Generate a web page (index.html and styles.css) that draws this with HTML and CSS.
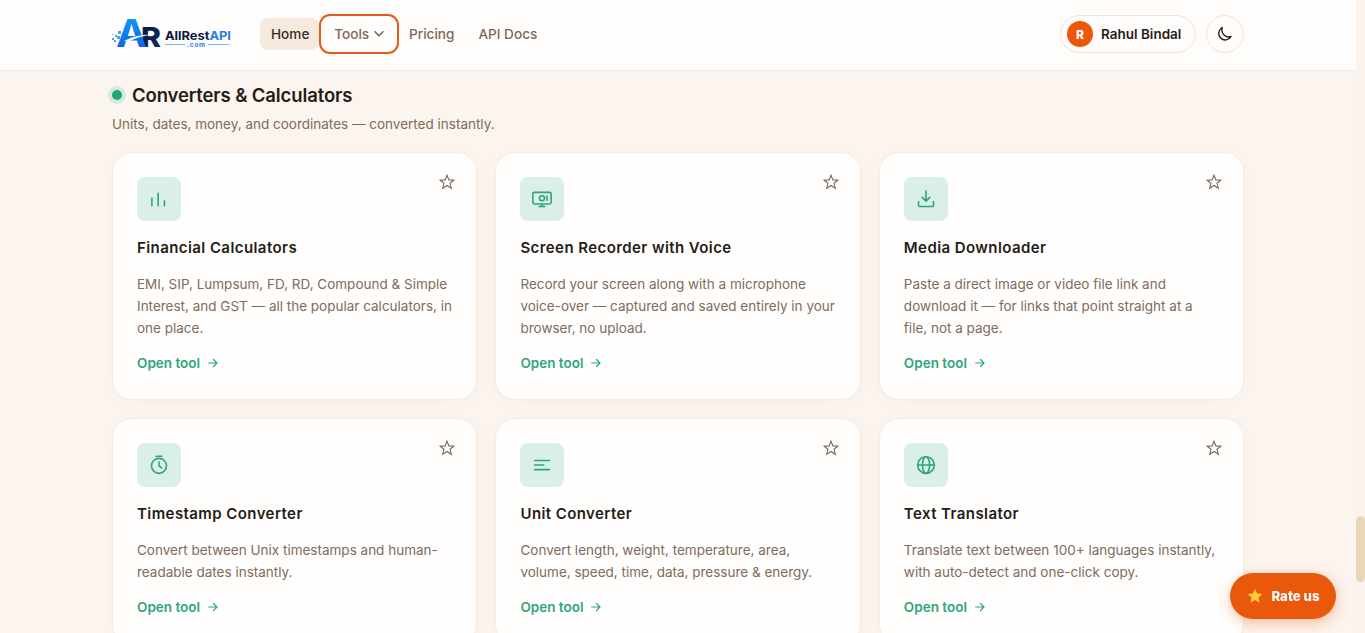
FILE: index.html
```html
<!DOCTYPE html>
<html lang="en">
<head>
    <meta charset="UTF-8">
    <meta name="viewport" content="width=device-width, initial-scale=1.0">
    <title>AllRestAPI - Converters &amp; Calculators</title>
    <link rel="stylesheet" href="styles.css">
</head>
<body>
    <header class="header">
        <div class="container header-inner">
            <a href="#" class="logo">
                <svg width="124" height="54" viewBox="0 -9 124 54">
                    <defs>
                        <linearGradient id="logoBlue" x1="0" y1="0" x2="0" y2="1">
                            <stop offset="0" stop-color="#12a5fb"/>
                            <stop offset="1" stop-color="#0b55e6"/>
                        </linearGradient>
                        <linearGradient id="logoNavy" x1="0" y1="0" x2="1" y2="1">
                            <stop offset="0" stop-color="#071334"/>
                            <stop offset="1" stop-color="#12306e"/>
                        </linearGradient>
                    </defs>
                    <g fill="#3ba7f5">
                        <rect x="0" y="22" width="2" height="2"/>
                        <rect x="3" y="19" width="2" height="2"/>
                        <rect x="6" y="15" width="3" height="3"/>
                        <rect x="5" y="20" width="3" height="3"/>
                        <rect x="2" y="24" width="2" height="2"/>
                        <rect x="0" y="18" width="1" height="1"/>
                    </g>
                    <text class="logo-mark" x="29" y="31" font-size="27.5" textLength="20" lengthAdjust="spacingAndGlyphs" fill="url(#logoNavy)">R</text>
                    <text class="logo-mark logo-mark-a" x="4" y="31" font-size="38" textLength="31" lengthAdjust="spacingAndGlyphs" fill="url(#logoBlue)">A</text>
                    <path d="M12 25Q24 18 41 18.500Q27 20 17 25.500Z" fill="#fff"/>
                    <text class="logo-text" x="53" y="24" font-size="12" textLength="66" lengthAdjust="spacingAndGlyphs" fill="#0c1a40">AllRest<tspan fill="#2b7df0">API</tspan></text>
                    <path d="M53 28.500H73M96 28.500H117" stroke="#7db4f3" stroke-width="1"/>
                    <text class="logo-text" x="75" y="30.500" font-size="6.500" textLength="18" fill="#2b7df0">.com</text>
                </svg>
            </a>
            <nav class="nav">
                <a href="#" class="nav-link active">Home</a>
                <button class="nav-link nav-tools">Tools
                    <svg width="10" height="6" viewBox="0 0 10 6" fill="none" stroke="currentColor" stroke-width="1.6" stroke-linecap="round" stroke-linejoin="round"><path d="M1 .8 5 4.8 9 .8"/></svg>
                </button>
                <a href="#" class="nav-link">Pricing</a>
                <a href="#" class="nav-link nav-docs">API Docs</a>
            </nav>
            <div class="header-actions">
                <a href="#" class="user-chip"><span class="avatar">R</span>Rahul Bindal</a>
                <button class="theme-button" aria-label="Toggle theme">
                    <svg width="16" height="16" viewBox="0 0 16 16" fill="none" stroke="currentColor" stroke-width="1.4" stroke-linejoin="round"><path d="M5.200 1.500A6.600 6.600 0 1 0 14.100 10.500C9.500 12.300 3.500 8.500 5.200 1.500Z"/></svg>
                </button>
            </div>
        </div>
    </header>

    <main class="container tools-section">
        <h2 class="section-title"><span class="dot"></span>Converters &amp; Calculators</h2>
        <p class="section-text">Units, dates, money, and coordinates — converted instantly.</p>

        <div class="tools-grid">
            <article class="tool-card">
                <div class="card-top">
                    <div class="tool-icon">
                        <svg viewBox="0 0 24 24"><path d="M3.500 20V11M11 20V5M18.500 20v-6"/></svg>
                    </div>
                    <svg class="star" viewBox="0 0 16 16"><path d="M8 1.300 9.900 5.900 14.800 6.200 11 9.300 12.300 14.200 8 11.500 3.700 14.200 5 9.300 1.200 6.200 6.100 5.900Z"/></svg>
                </div>
                <h3>Financial Calculators</h3>
                <p>EMI, SIP, Lumpsum, FD, RD, Compound &amp; Simple Interest, and GST — all the popular calculators, in one place.</p>
                <a href="#" class="open-link">Open tool <svg viewBox="0 0 10 10"><path d="M.7 5H9M5.500 1.500 9 5 5.500 8.500"/></svg></a>
            </article>

            <article class="tool-card">
                <div class="card-top">
                    <div class="tool-icon">
                        <svg viewBox="0 0 24 24"><rect x="1" y="4" width="22" height="14" rx="2"/><circle cx="12" cy="11" r="3"/><path d="M18 8.500v5M12 18v3M8.500 21h7"/></svg>
                    </div>
                    <svg class="star" viewBox="0 0 16 16"><path d="M8 1.300 9.900 5.900 14.800 6.200 11 9.300 12.300 14.200 8 11.500 3.700 14.200 5 9.300 1.200 6.200 6.100 5.900Z"/></svg>
                </div>
                <h3>Screen Recorder with Voice</h3>
                <p>Record your screen along with a microphone voice-over — captured and saved entirely in your browser, no upload.</p>
                <a href="#" class="open-link">Open tool <svg viewBox="0 0 10 10"><path d="M.7 5H9M5.500 1.500 9 5 5.500 8.500"/></svg></a>
            </article>

            <article class="tool-card">
                <div class="card-top">
                    <div class="tool-icon">
                        <svg viewBox="0 0 24 24"><path d="M12 2.500V14M7.500 10l4.500 4.500 4.500-4.500M3 15v4.500a1.500 1.500 0 0 0 1.500 1.500h15a1.500 1.500 0 0 0 1.500-1.500V15"/></svg>
                    </div>
                    <svg class="star" viewBox="0 0 16 16"><path d="M8 1.300 9.900 5.900 14.800 6.200 11 9.300 12.300 14.200 8 11.500 3.700 14.200 5 9.300 1.200 6.200 6.100 5.900Z"/></svg>
                </div>
                <h3>Media Downloader</h3>
                <p>Paste a direct image or video file link and download it — for links that point straight at a file, not a page.</p>
                <a href="#" class="open-link">Open tool <svg viewBox="0 0 10 10"><path d="M.7 5H9M5.500 1.500 9 5 5.500 8.500"/></svg></a>
            </article>

            <article class="tool-card">
                <div class="card-top">
                    <div class="tool-icon">
                        <svg viewBox="0 0 24 24"><circle cx="12" cy="13" r="9"/><path d="M12 8.500V13l3 2.500M8.500 1.500h7"/></svg>
                    </div>
                    <svg class="star" viewBox="0 0 16 16"><path d="M8 1.300 9.900 5.900 14.800 6.200 11 9.300 12.300 14.200 8 11.500 3.700 14.200 5 9.300 1.200 6.200 6.100 5.900Z"/></svg>
                </div>
                <h3>Timestamp Converter</h3>
                <p>Convert between Unix timestamps and human-readable dates instantly.</p>
                <a href="#" class="open-link">Open tool <svg viewBox="0 0 10 10"><path d="M.7 5H9M5.500 1.500 9 5 5.500 8.500"/></svg></a>
            </article>

            <article class="tool-card">
                <div class="card-top">
                    <div class="tool-icon">
                        <svg viewBox="0 0 24 24"><path d="M3 6.500h18M3 12h11M3 17.500h18"/></svg>
                    </div>
                    <svg class="star" viewBox="0 0 16 16"><path d="M8 1.300 9.900 5.900 14.800 6.200 11 9.300 12.300 14.200 8 11.500 3.700 14.200 5 9.300 1.200 6.200 6.100 5.900Z"/></svg>
                </div>
                <h3>Unit Converter</h3>
                <p>Convert length, weight, temperature, area, volume, speed, time, data, pressure &amp; energy.</p>
                <a href="#" class="open-link">Open tool <svg viewBox="0 0 10 10"><path d="M.7 5H9M5.500 1.500 9 5 5.500 8.500"/></svg></a>
            </article>

            <article class="tool-card">
                <div class="card-top">
                    <div class="tool-icon">
                        <svg viewBox="0 0 24 24"><circle cx="12" cy="12" r="10"/><ellipse cx="12" cy="12" rx="4.300" ry="10"/><path d="M2 12h20"/></svg>
                    </div>
                    <svg class="star" viewBox="0 0 16 16"><path d="M8 1.300 9.900 5.900 14.800 6.200 11 9.300 12.300 14.200 8 11.500 3.700 14.200 5 9.300 1.200 6.200 6.100 5.900Z"/></svg>
                </div>
                <h3>Text Translator</h3>
                <p>Translate text between 100+ languages instantly, with auto-detect and one-click copy.</p>
                <a href="#" class="open-link">Open tool <svg viewBox="0 0 10 10"><path d="M.7 5H9M5.500 1.500 9 5 5.500 8.500"/></svg></a>
            </article>
        </div>
    </main>

    <button class="rate-button">
        <svg width="16" height="16" viewBox="0 0 16 16"><path d="M8 .8 10.200 5.600 15.300 6.100 11.500 9.600 12.600 14.700 8 12 3.400 14.700 4.500 9.600 .7 6.100 5.800 5.600Z" fill="#ffc93c"/></svg>
        Rate us
    </button>
    <div class="scroll-track"><div class="scroll-thumb"></div></div>
</body>
</html>
```
FILE: styles.css
```css
* {
    margin: 0;
    padding: 0;
    box-sizing: border-box;
}

body {
    height: 100vh;
    overflow: hidden;
    padding-right: 9px;
    font-family: Inter, "Liberation Sans", sans-serif;
    background-color: #fcf4ee;
    color: #241c17;
}

a {
    color: inherit;
    text-decoration: none;
}

button {
    font: inherit;
    border: none;
    background: none;
    cursor: pointer;
}

.container {
    max-width: 1180px;
    margin: 0 auto;
    padding: 0 24px;
}

.header {
    height: 71px;
    background-color: #fffdfc;
    border-bottom: 1px solid #f3ebe4;
}

.header-inner {
    display: flex;
    align-items: center;
    height: 68px;
}

.logo {
    width: 124px;
    height: 54px;
}

.logo-mark {
    font-weight: 800;
}

.logo-mark-a {
    font-weight: 700;
}

.logo-text {
    font-weight: 700;
}

.nav {
    display: flex;
    align-items: center;
    margin-left: 24px;
}

.nav-link {
    display: flex;
    align-items: center;
    gap: 5px;
    height: 32px;
    padding: 0 11px;
    border-radius: 8px;
    font-size: 13.6px;
    font-weight: 500;
    color: #7d6756;
    white-space: nowrap;
}

.nav-link.active {
    padding-right: 10px;
    background-color: #f6e9de;
    color: #3a2c23;
}

.nav-tools {
    height: 40px;
    padding: 0 12.8px;
    border: 2px solid #e65a1a;
    border-radius: 11px;
    margin-right: -1px;
}

.nav-docs {
    margin-left: 2px;
}

.header-actions {
    display: flex;
    align-items: center;
    gap: 10px;
    margin-left: auto;
}

.user-chip {
    display: flex;
    align-items: center;
    gap: 8px;
    width: 136px;
    height: 38px;
    padding-left: 6px;
    border: 1px solid #f4e3d1;
    border-radius: 19px;
    font-size: 13.5px;
    font-weight: 600;
    white-space: nowrap;
}

.avatar {
    display: flex;
    align-items: center;
    justify-content: center;
    width: 26px;
    height: 26px;
    border-radius: 50%;
    background-color: #ea580c;
    color: #fff;
    font-size: 12px;
    font-weight: 800;
}

.theme-button {
    display: flex;
    align-items: center;
    justify-content: center;
    width: 38px;
    height: 38px;
    border: 1px solid #f4e3d1;
    border-radius: 50%;
    color: #241c17;
}

.tools-section {
    padding-top: 12px;
}

.section-title {
    display: flex;
    align-items: center;
    gap: 10px;
    font-size: 18.5px;
    font-weight: 600;
    letter-spacing: -0.12px;
    line-height: 24px;
}

.dot {
    width: 10px;
    height: 10px;
    border-radius: 50%;
    background-color: #1fa574;
    box-shadow: 0 0 0 4px #d7e9de;
}

.section-text {
    margin-top: 6px;
    font-size: 13.5px;
    line-height: 22px;
    color: #806b5c;
}

.tools-grid {
    display: grid;
    grid-template-columns: repeat(3, 1fr);
    gap: 18px 18.3px;
    margin-top: 17.4px;
}

.tool-card {
    padding: 24px;
    background-color: #fffefc;
    border: 1px solid #f5ece5;
    border-radius: 20px;
    box-shadow: 0 2px 12px rgba(120, 90, 60, 0.04);
}

.card-top {
    display: flex;
    justify-content: space-between;
}

.tool-icon {
    display: flex;
    align-items: center;
    justify-content: center;
    width: 44px;
    height: 44px;
    border-radius: 8px;
    background-color: #daefe6;
}

.tool-icon svg {
    width: 20px;
    height: 20px;
    fill: none;
    stroke: #2da67c;
    stroke-width: 1.9;
    stroke-linecap: round;
    stroke-linejoin: round;
}

.star {
    width: 16px;
    height: 16px;
    margin-top: -3px;
    margin-right: -3.2px;
    fill: none;
    stroke: #7b6759;
    stroke-width: 1.1;
}

.tool-card h3 {
    margin: 16px 0;
    font-size: 15px;
    font-weight: 600;
    letter-spacing: 0.42px;
    line-height: 21px;
}

.tool-card p {
    font-size: 13.5px;
    line-height: 21.6px;
    color: #806b5c;
}

.open-link {
    display: flex;
    align-items: center;
    gap: 8px;
    height: 22px;
    margin: 12.8px 0 1.2px;
    font-size: 13.5px;
    font-weight: 600;
    color: #2da67c;
}

.open-link svg {
    width: 10px;
    height: 10px;
    fill: none;
    stroke: currentColor;
    stroke-width: 1.2;
    stroke-linecap: round;
    stroke-linejoin: round;
}

.rate-button {
    position: fixed;
    right: 29px;
    bottom: 14px;
    display: flex;
    align-items: center;
    justify-content: center;
    gap: 8px;
    width: 106px;
    height: 46px;
    padding-left: 1px;
    border-radius: 23px;
    background-color: #ea580c;
    box-shadow: 0 4px 14px rgba(234, 88, 12, 0.35);
    color: #fff;
    font-size: 13.2px;
    font-weight: 800;
}

.scroll-track {
    position: fixed;
    top: 0;
    right: 0;
    width: 9px;
    height: 100%;
    background-color: #fbf3ec;
}

.scroll-thumb {
    height: 66px;
    margin-top: 516px;
    border-radius: 5px;
    background-color: #ead7b9;
}
```
